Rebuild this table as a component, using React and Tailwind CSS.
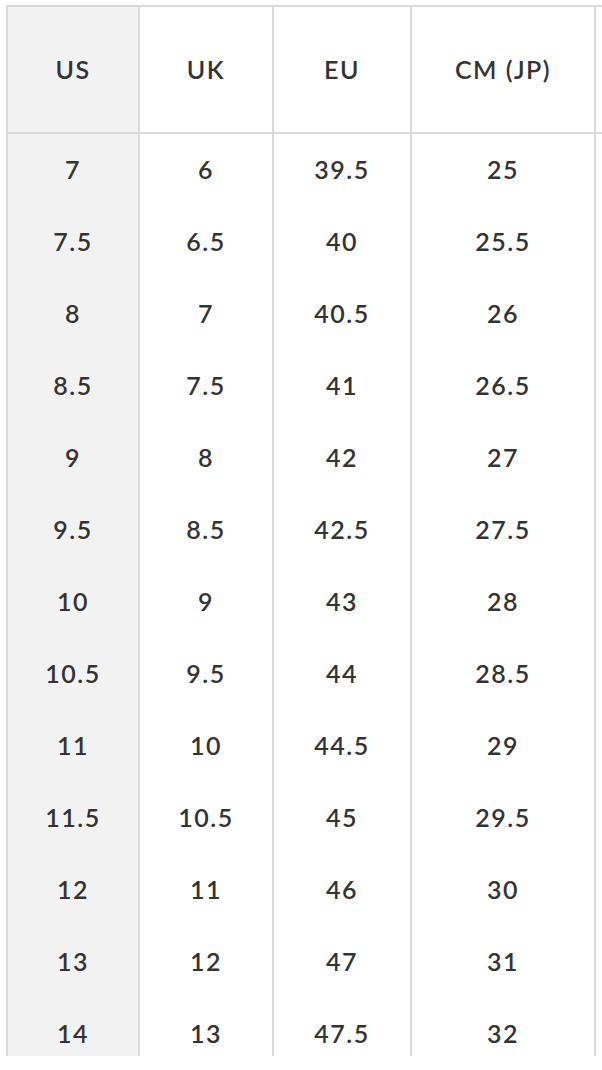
const rows = [
  ['7', '6', '39.5', '25'],
  ['7.5', '6.5', '40', '25.5'],
  ['8', '7', '40.5', '26'],
  ['8.5', '7.5', '41', '26.5'],
  ['9', '8', '42', '27'],
  ['9.5', '8.5', '42.5', '27.5'],
  ['10', '9', '43', '28'],
  ['10.5', '9.5', '44', '28.5'],
  ['11', '10', '44.5', '29'],
  ['11.5', '10.5', '45', '29.5'],
  ['12', '11', '46', '30'],
  ['13', '12', '47', '31'],
  ['14', '13', '47.5', '32'],
];

const headers = ['US', 'UK', 'EU', 'CM (JP)', ''];

const Cell = ({ children, first, head }) => (
  <div
    className={`flex items-center justify-center ${first ? 'bg-[#f2f2f2]' : 'bg-white'} ${head ? 'border-b-2 border-[#dadada]' : ''}`}
  >
    {children}
  </div>
);

export default function App() {
  return (
    <div className="w-[602px] h-[1056px] overflow-hidden bg-white pl-[6px] pt-[5px]">
      <div
        className="grid w-max gap-x-[2px] bg-[#dadada] pl-[2px] pt-[2px] grid-cols-[130px_132px_136px_182px_200px] grid-rows-[127px] auto-rows-[72px] text-[25px] font-semibold tracking-[1.5px] text-[#333333]"
        style={{ fontFamily: 'Lato, "Open Sans", sans-serif' }}
      >
        {headers.map((h, i) => (
          <Cell key={`h-${i}`} first={i === 0} head>{h}</Cell>
        ))}
        {rows.map((row, r) => (
          [...row, ''].map((v, i) => (
            <Cell key={`${r}-${i}`} first={i === 0}>{v}</Cell>
          ))
        ))}
      </div>
    </div>
  );
}
